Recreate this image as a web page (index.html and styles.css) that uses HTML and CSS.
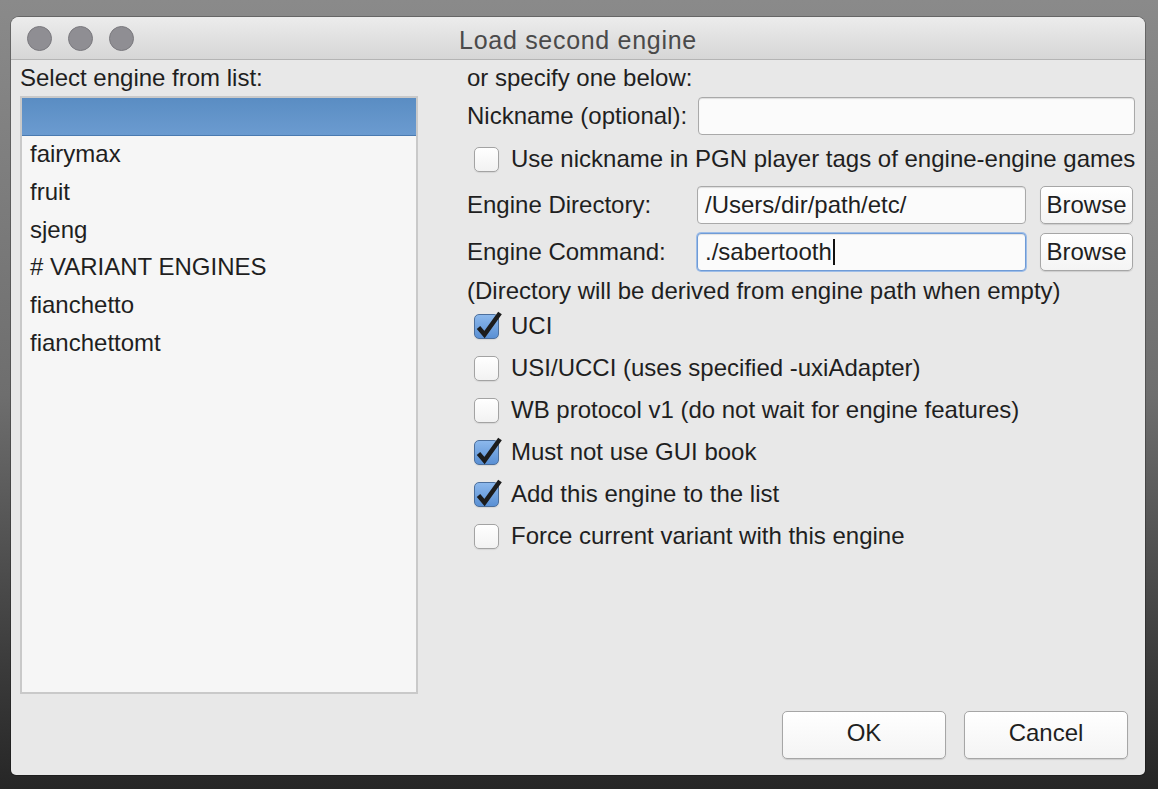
FILE: index.html
```html
<!DOCTYPE html>
<html>
<head>
<meta charset="utf-8">
<link rel="stylesheet" href="styles.css">
</head>
<body>
<div class="window">
  <div class="titlebar">
    <div class="lights"><span class="light"></span><span class="light"></span><span class="light"></span></div>
    <div class="title">Load second engine</div>
  </div>
  <div class="body">
    <div class="main">
      <div class="left">
        <div class="heading">Select engine from list:</div>
        <div class="list">
          <div class="item selected"></div>
          <div class="item">fairymax</div>
          <div class="item">fruit</div>
          <div class="item">sjeng</div>
          <div class="item"># VARIANT ENGINES</div>
          <div class="item">fianchetto</div>
          <div class="item">fianchettomt</div>
        </div>
      </div>
      <div class="right">
        <div class="heading">or specify one below:</div>
        <div class="row nick">
          <span class="nicklabel">Nickname (optional):</span>
          <span class="input wide"></span>
        </div>
        <div class="check first"><span class="box"></span><span>Use nickname in PGN player tags of engine-engine games</span></div>
        <div class="row dir">
          <span class="label">Engine Directory:</span>
          <span class="input">/Users/dir/path/etc/</span>
          <span class="btn small">Browse</span>
        </div>
        <div class="row cmd">
          <span class="label">Engine Command:</span>
          <span class="input focus">./sabertooth<span class="caret"></span></span>
          <span class="btn small">Browse</span>
        </div>
        <div class="note">(Directory will be derived from engine path when empty)</div>
        <div class="checks">
          <div class="check"><span class="box on"><svg class="tick" viewBox="0 0 25 25"><path d="M4.5 13.5 L10.5 20.5 L26 -1"/></svg></span><span>UCI</span></div>
          <div class="check"><span class="box"></span><span>USI/UCCI (uses specified -uxiAdapter)</span></div>
          <div class="check"><span class="box"></span><span>WB protocol v1 (do not wait for engine features)</span></div>
          <div class="check"><span class="box on"><svg class="tick" viewBox="0 0 25 25"><path d="M4.5 13.5 L10.5 20.5 L26 -1"/></svg></span><span>Must not use GUI book</span></div>
          <div class="check"><span class="box on"><svg class="tick" viewBox="0 0 25 25"><path d="M4.5 13.5 L10.5 20.5 L26 -1"/></svg></span><span>Add this engine to the list</span></div>
          <div class="check"><span class="box"></span><span>Force current variant with this engine</span></div>
        </div>
      </div>
    </div>
    <div class="footer">
      <span class="btn big">OK</span>
      <span class="btn big">Cancel</span>
    </div>
  </div>
</div>
</body>
</html>
```
FILE: styles.css
```css
html, body {
  margin: 0;
  padding: 0;
}
body {
  width: 1158px;
  height: 789px;
  overflow: hidden;
  background: linear-gradient(180deg, #8a8a8a 0%, #6e6e6e 50%, #3a3a3a 85%, #262626 100%);
  font-family: "Liberation Sans", Arial, sans-serif;
  color: #1f1f1f;
  font-size: 24px;
  white-space: nowrap;
}
.window {
  margin: 17px 0 0 11px;
  width: 1134px;
  height: 758px;
  background: #e8e8e8;
  border-radius: 8px 8px 5px 5px;
  overflow: hidden;
  display: flex;
  flex-direction: column;
  box-shadow: 0 0 0 1px rgba(0,0,0,0.25);
}
.titlebar {
  height: 42px;
  flex: none;
  background: linear-gradient(180deg, #ececec 0%, #d6d6d6 100%);
  border-bottom: 1px solid #b4b4b4;
  display: flex;
  align-items: center;
  position: relative;
}
.lights {
  display: flex;
  gap: 16px;
  padding-left: 16px;
}
.light {
  width: 23px;
  height: 23px;
  border-radius: 50%;
  background: #8f8e93;
  border: 1px solid #7a797e;
}
.title {
  position: absolute;
  left: 0;
  right: 0;
  text-align: center;
  color: #4a4a4a;
  font-size: 25px;
  letter-spacing: 0.7px;
  top: 9px;
}
.body {
  flex: 1;
  display: flex;
  flex-direction: column;
}
.main {
  display: flex;
  flex: 1;
}
.left {
  width: 398px;
  margin-left: 9px;
  display: flex;
  flex-direction: column;
}
.heading {
  height: 36px;
  line-height: 36px;
}
.list {
  height: 594px;
  border: 2px solid #c9c9c9;
  background: #f6f6f6;
}
.item {
  height: 37.8px;
  line-height: 35px;
  padding-left: 8px;
}
.item.selected {
  height: 37px;
  background: linear-gradient(180deg, #5a8dc3 0%, #6b9bd0 100%);
  border-bottom: 1px solid #4a7ab0;
}
.right {
  margin-left: 49px;
  width: 668px;
  display: flex;
  flex-direction: column;
}
.row {
  display: flex;
  align-items: center;
}
.label {
  width: 230px;
  flex: none;
}
.nick {
  margin-top: 1px;
  height: 38px;
  justify-content: space-between;
}
.input {
  box-sizing: border-box;
  height: 38px;
  border: 1px solid #a9a9a9;
  border-radius: 4px;
  background: #fbfbfb;
  box-shadow: inset 0 1px 1px rgba(0,0,0,0.12);
  width: 329px;
  padding-left: 7px;
  line-height: 36px;
  display: flex;
  align-items: center;
}
.input.wide {
  width: 437px;
}
.input.focus {
  border: 1px solid #6f9bd6;
  box-shadow: 0 0 0 1px #9dbde8, inset 0 1px 1px rgba(0,0,0,0.1);
}
.caret {
  display: inline-block;
  width: 2px;
  height: 26px;
  background: #111;
  margin-left: 1px;
}
.btn {
  box-sizing: border-box;
  display: flex;
  align-items: center;
  justify-content: center;
  background: linear-gradient(180deg, #ffffff 0%, #f4f4f4 100%);
  border: 1px solid #a6a6a6;
  border-radius: 5px;
  box-shadow: 0 1px 1px rgba(0,0,0,0.12);
}
.btn.small {
  width: 93px;
  height: 38px;
  margin-left: 14px;
}
.dir {
  margin-top: 8px;
  height: 38px;
}
.cmd {
  margin-top: 9px;
  height: 38px;
}
.check {
  display: flex;
  align-items: center;
  height: 42px;
  padding-left: 7px;
}
.checks {
  padding-top: 2px;
}
.check.first {
  margin-top: 5px;
  height: 38px;
}
.box {
  box-sizing: border-box;
  width: 25px;
  height: 25px;
  flex: none;
  border: 1px solid #a3a3a3;
  border-radius: 5px;
  background: linear-gradient(180deg, #ffffff 0%, #f2f2f2 100%);
  box-shadow: 0 1px 1px rgba(0,0,0,0.08);
  margin-right: 12px;
  position: relative;
}
.box.on {
  background: linear-gradient(180deg, #8cb8ec 0%, #5a90d4 100%);
  border: 1px solid #4c6f9c;
}
.tick {
  position: absolute;
  left: -1px;
  top: -1px;
  width: 25px;
  height: 25px;
  overflow: visible;
}
.tick path {
  fill: none;
  stroke: #1c1c1c;
  stroke-width: 4.5;
  stroke-linejoin: miter;
}
.note {
  margin-top: 8px;
  height: 24px;
  line-height: 24px;
}
.footer {
  display: flex;
  justify-content: flex-end;
  gap: 18px;
  padding: 0 17px 16px 0;
  height: 48px;
}
.btn.big {
  width: 164px;
  height: 48px;
  padding-bottom: 4px;
}
```
